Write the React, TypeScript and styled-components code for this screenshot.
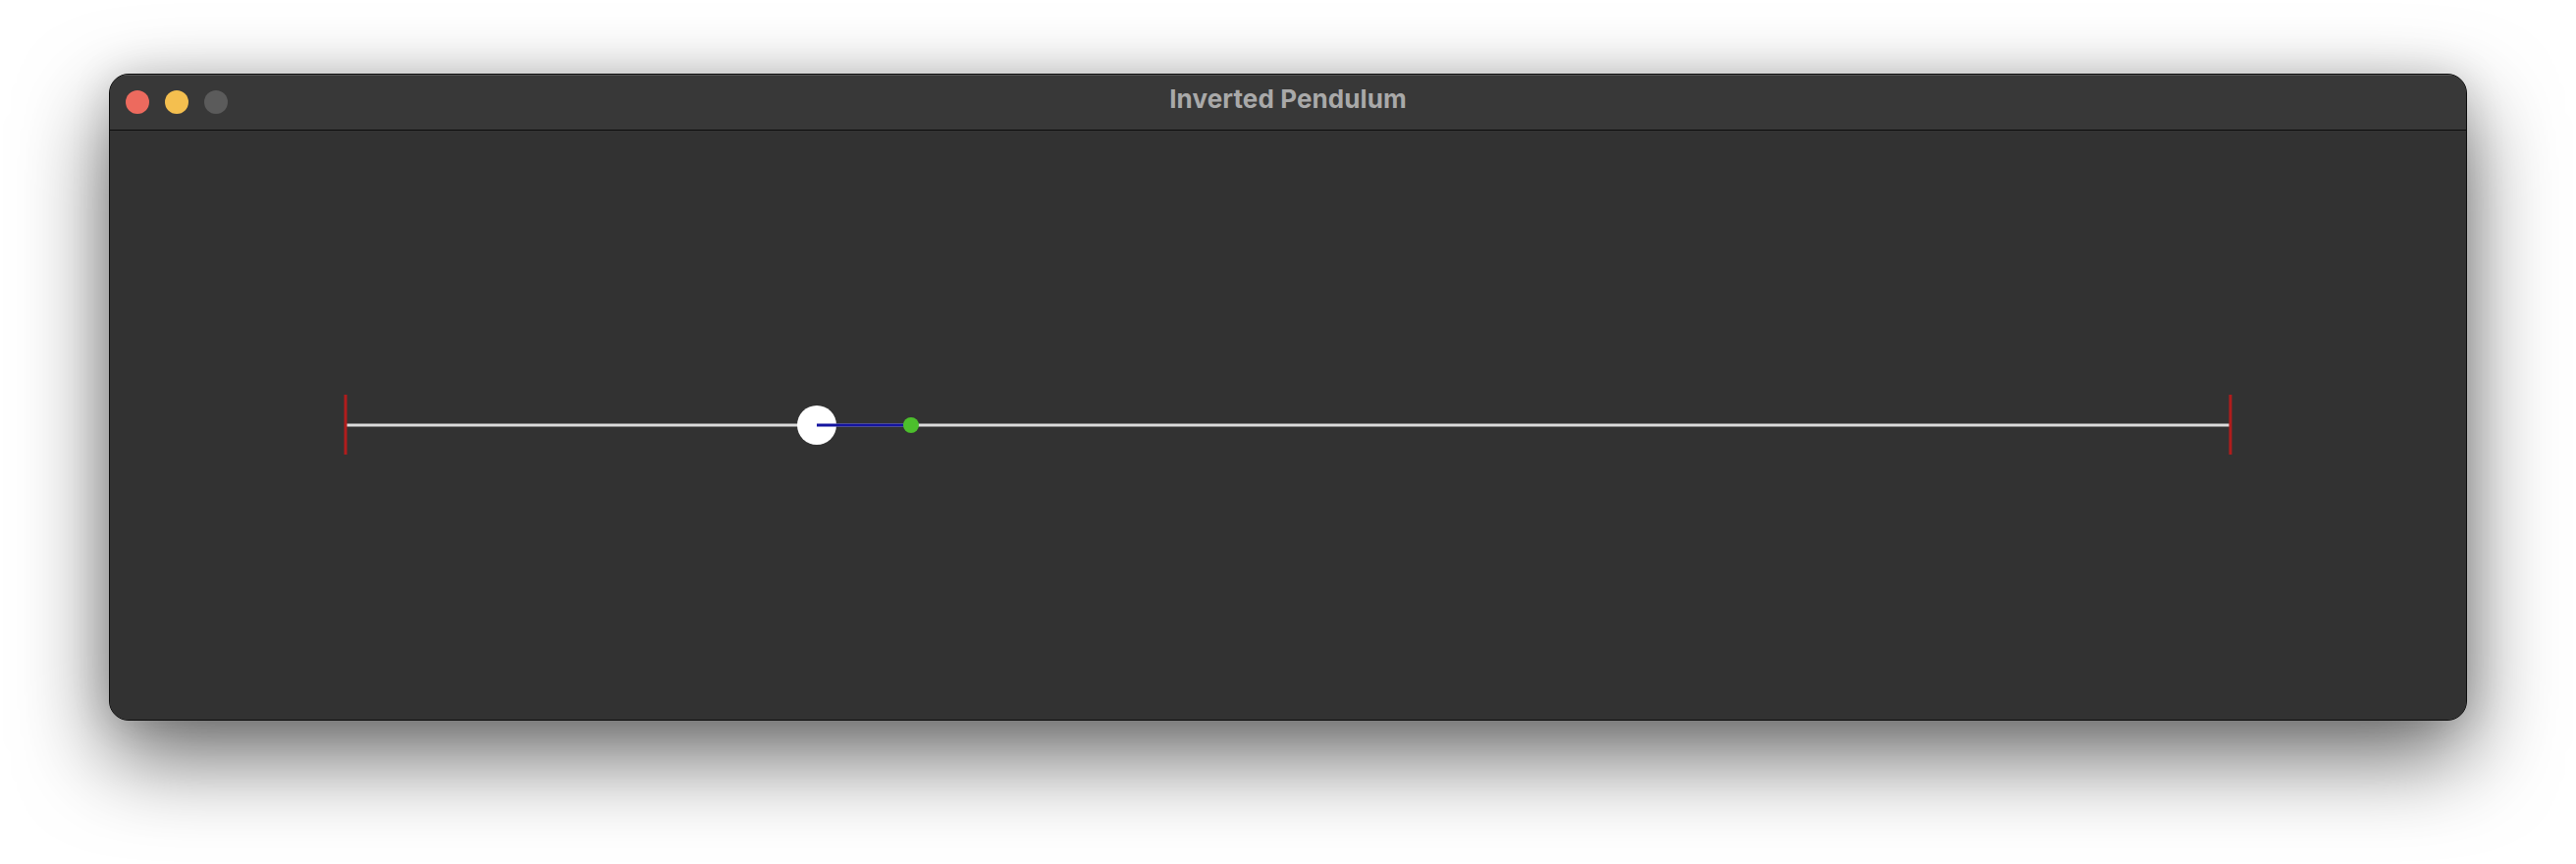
import styled, { createGlobalStyle } from 'styled-components';

const GlobalStyle = createGlobalStyle`
  html, body {
    margin: 0;
    padding: 0;
    background: #ffffff;
  }
  body {
    font-family: Inter, "Liberation Sans", Arial, sans-serif;
  }
`;

const Desktop = styled.div`
  width: 2624px;
  height: 880px;
  box-sizing: border-box;
  padding: 75px 0 0 111px;
  background: #ffffff;
  overflow: hidden;
`;

const Window = styled.div`
  width: 2402px;
  box-sizing: border-box;
  border: 1px solid #0c0c0c;
  border-radius: 20px;
  overflow: hidden;
  background: #323232;
  box-shadow:
    inset 0 0 0 1px rgba(255, 255, 255, 0.16),
    0 36px 90px rgba(0, 0, 0, 0.6),
    0 0 40px rgba(0, 0, 0, 0.12);
`;

const TitleBar = styled.div`
  position: relative;
  height: 56px;
  display: flex;
  align-items: center;
  justify-content: center;
  background: #383838;
  border-bottom: 1px solid #0e0e0e;
  box-shadow: inset 0 1px 0 rgba(255, 255, 255, 0.14);
`;

const Lights = styled.div`
  position: absolute;
  left: 16px;
  top: 0;
  bottom: 0;
  display: flex;
  align-items: center;
  gap: 16px;
`;

const Light = styled.span<{ $color: string }>`
  width: 24px;
  height: 24px;
  border-radius: 50%;
  background: ${(p) => p.$color};
`;

const Title = styled.div`
  font-size: 26px;
  font-weight: 700;
  color: #a9a9a9;
  letter-spacing: 0.1px;
  margin-bottom: 8px;
`;

const Canvas = styled.div`
  height: 600px;
  background: #323232;

  svg {
    display: block;
  }
`;

const track = { x1: 240, x2: 2160, y: 300 };
const cart = { x: 720, r: 20 };
const tip = { x: 816, r: 8 };

export default function App() {
  return (
    <>
      <GlobalStyle />
      <Desktop>
        <Window>
          <TitleBar>
            <Lights>
              <Light $color="#ed6a5e" />
              <Light $color="#f4bf4f" />
              <Light $color="#5b5b5b" />
            </Lights>
            <Title>Inverted Pendulum</Title>
          </TitleBar>
          <Canvas>
            <svg width="2400" height="600" viewBox="0 0 2400 600">
              <line x1={track.x1} y1={track.y} x2={track.x2} y2={track.y} stroke="#dcdcdc" strokeWidth="3" />
              <line x1={track.x1} y1={track.y - 31} x2={track.x1} y2={track.y + 30} stroke="#b01c1c" strokeWidth="3" />
              <line x1={track.x2} y1={track.y - 31} x2={track.x2} y2={track.y + 30} stroke="#b01c1c" strokeWidth="3" />
              <circle cx={cart.x} cy={track.y} r={cart.r} fill="#ffffff" />
              <line x1={cart.x} y1={track.y} x2={tip.x} y2={track.y} stroke="#1414a0" strokeWidth="3" />
              <circle cx={tip.x} cy={track.y} r={tip.r} fill="#4cbf2c" />
            </svg>
          </Canvas>
        </Window>
      </Desktop>
    </>
  );
}
